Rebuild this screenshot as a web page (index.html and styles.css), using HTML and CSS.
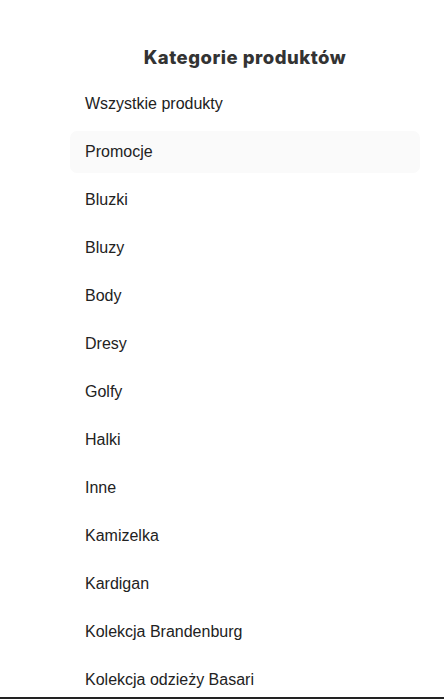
FILE: index.html
```html
<!DOCTYPE html>
<html lang="pl">
<head>
<meta charset="utf-8">
<title>Kategorie produktów</title>
<link rel="stylesheet" href="styles.css">
</head>
<body>
<div class="page">
  <aside class="categories">
    <h2 class="categories__title">Kategorie produktów</h2>
    <ul class="categories__list">
      <li class="categories__item">Wszystkie produkty</li>
      <li class="categories__item categories__item--active">Promocje</li>
      <li class="categories__item">Bluzki</li>
      <li class="categories__item">Bluzy</li>
      <li class="categories__item">Body</li>
      <li class="categories__item">Dresy</li>
      <li class="categories__item">Golfy</li>
      <li class="categories__item">Halki</li>
      <li class="categories__item">Inne</li>
      <li class="categories__item">Kamizelka</li>
      <li class="categories__item">Kardigan</li>
      <li class="categories__item">Kolekcja Brandenburg</li>
      <li class="categories__item">Kolekcja odzieży Basari</li>
    </ul>
  </aside>
</div>
<div class="bottom-edge"></div>
</body>
</html>
```

FILE: styles.css
```css
* { box-sizing: border-box; }
html, body { margin: 0; padding: 0; background: #fff; }
body {
  font-family: "Liberation Sans", Arial, sans-serif;
  color: #222;
}
.page {
  width: 444px;
  height: 699px;
  overflow: hidden;
}
.categories {
  margin-left: 70px;
  width: 350px;
  padding-top: 45px;
}
.categories__title {
  margin: 0;
  height: 24px;
  line-height: 24px;
  text-align: center;
  font-family: Inter, "Open Sans", sans-serif;
  font-weight: 800;
  font-size: 18.5px;
  letter-spacing: 0.5px;
  color: #333;
}
.categories__list {
  list-style: none;
  margin: 14px 0 0;
  padding: 0;
  display: flex;
  flex-direction: column;
  gap: 6px;
}
.categories__item {
  height: 42px;
  line-height: 42px;
  padding-left: 15px;
  font-size: 16px;
  border-radius: 7px;
}
.categories__item--active {
  background: #fafafa;
}
.bottom-edge {
  position: fixed;
  left: 0;
  right: 0;
  bottom: 0;
  height: 2px;
  background: #222;
}
```
